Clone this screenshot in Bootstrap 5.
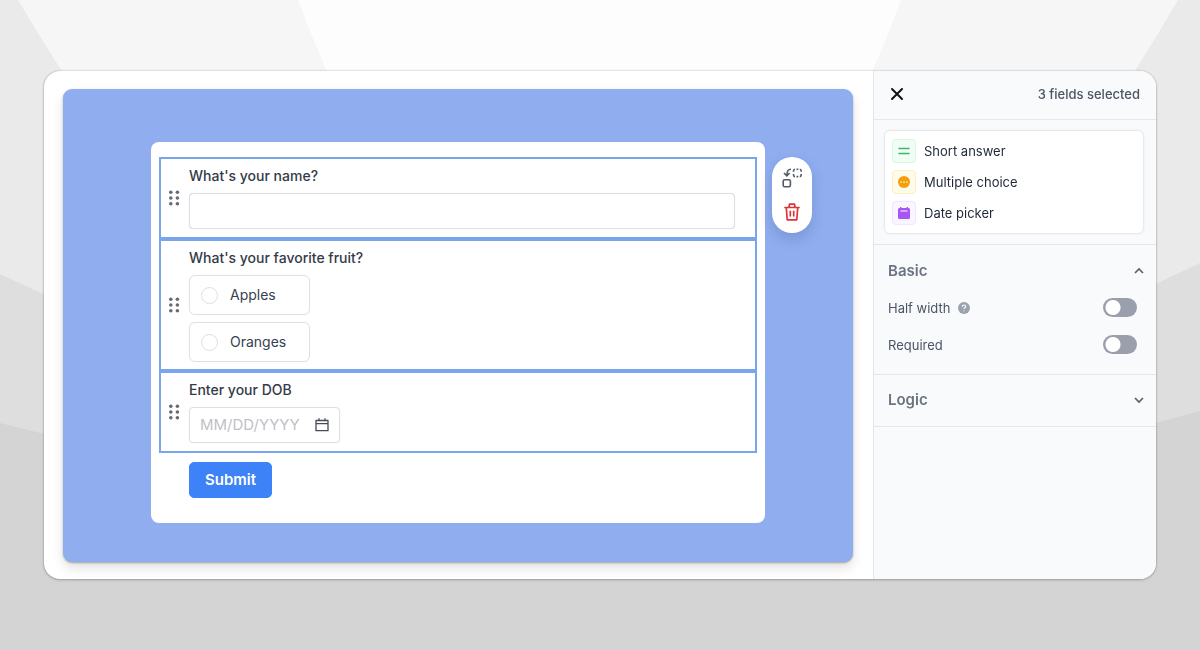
<!DOCTYPE html>
<html lang="en">
<head>
<meta charset="utf-8">
<meta name="viewport" content="width=device-width, initial-scale=1">
<title>Form builder</title>
<link href="https://cdn.jsdelivr.net/npm/bootstrap@5.3.0/dist/css/bootstrap.min.css" rel="stylesheet">
<style>
  body { font-family: Inter, "Liberation Sans", sans-serif; font-size: 14px; line-height: 20px; color: #374151; background: #d4d4d4; }
  svg { display: block; }
  .backdrop { position: fixed; inset: 0; width: 100%; height: 100%; z-index: -1; }
  .stage { min-height: 100vh; padding: 71px 44px; }
  .window { min-height: 508px; background: #fff; border-radius: 16px; overflow: hidden; box-shadow: 0 0 2px rgba(0,0,0,.3), 0 1px 3px rgba(0,0,0,.2); }
  .preview { padding: 18px 20px 17px 19px; }
  .canvas { background: #90aeef; border-radius: 9px; padding: 53px 88px 39px; box-shadow: 0 1px 2px rgba(0,0,0,.3), 0 6px 12px rgba(0,0,0,.12); }
  .form-sheet { background: #fff; border-radius: 8px; padding: 15px 8px 25px; }
  .field { border: 2px solid #79a5ed; padding: 7px 20px 8px 28px; }
  .field-choices { padding-bottom: 7px; }
  .field-title { display: block; font-weight: 500; line-height: 20px; margin-bottom: 7px; color: #343b48; }
  .grip { left: 8px; top: 50%; transform: translateY(-50%); background: none; border: 0; padding: 0; }
  .text-input, .date-box { height: 36px; border: 1px solid #dcdfe3; border-radius: 4px; box-shadow: 0 0 1px rgba(0,0,0,.12); }
  .choices { gap: 7px; }
  .choice { width: 121px; height: 40px; border: 1px solid #dfe1e5; border-radius: 6px; padding: 0 11px; gap: 12px; box-shadow: 0 0 1px rgba(0,0,0,.1); }
  .choice .form-check-input { width: 17px; height: 17px; margin: 0; border-color: #dcdee2; }
  .date-box { width: 151px; padding: 0 10px; }
  .date-box input { width: 104px; border: 0; padding: 0; outline: 0; background: none; font-size: 15px; }
  .date-box input::placeholder { color: #bfc1c6; opacity: 1; }
  .submit { background: #3d82f6; color: #fff; font-weight: 600; font-size: 15px; line-height: 20px; padding: 7px 15px; border: 1px solid #3d82f6; border-radius: 5px; margin: 9px 0 0 30px; display: block; }
  .tools { left: 100%; top: 15px; width: 40px; height: 76px; margin-left: 7px; border-radius: 20px; background: #fff; padding: 11px 0 12px; box-shadow: 0 6px 14px rgba(30,50,110,.2); }
  .tools button, .panel button { background: none; border: 0; padding: 0; }
  .panel { flex: 0 0 283px; background: #f9fafc; border-left: 1px solid #e6e7ea; font-size: 13px; color: #4b5563; }
  .panel-section { border-bottom: 1px solid #e5e7eb; }
  .panel-head { height: 49px; padding: 0 16px 2px; font-weight: 500; }
  .selected-wrap { padding: 10px 12px 10px 10px; }
  .picked { background: #fff; border: 1px solid #e8eaed; border-radius: 6px; padding: 8px 7px; gap: 7px; box-shadow: 0 0 2px rgba(0,0,0,.08); color: #1f2937; }
  .tile { width: 24px; height: 24px; border: 1px solid; border-radius: 4px; }
  .tile-green { background: #effdf4; border-color: #d5f9e1; }
  .tile-amber { background: #fffbea; border-color: #fdf0bd; }
  .tile-purple { background: #faf5ff; border-color: #f1e5ff; }
  .basic { padding: 16px 12px 11px 14px; }
  .basic .section-toggle { margin-bottom: 8px; }
  .setting { height: 37px; padding-right: 7px; }
  .logic { padding: 15px 12px 16px 14px; }
  .section-toggle { font-size: 15px; font-weight: 600; color: #6b7280; line-height: 20px; }
  .panel .switch { width: 34px; height: 19px; margin: 0; border: 0; float: none; background-color: #9b9fac; border-radius: 10px; background-image: radial-gradient(circle at 10px 50%, #fff 7px, transparent 8px); background-size: 100% 100%; background-position: 0 0; box-shadow: none; }
</style>
</head>
<body>
<svg class="backdrop" viewBox="0 0 1200 650" preserveAspectRatio="none" aria-hidden="true">
  <rect width="1200" height="650" fill="#d4d4d4"/>
  <path d="M0 0H1200V411Q600 580 0 423Z" fill="#dedede"/>
  <path d="M0 0H1200V263Q600 560 0 274Z" fill="#eaeaea"/>
  <path d="M18 0Q315 500 600 500T1178 0Z" fill="#f6f6f6"/>
  <path d="M298 0Q430 350 600 350T901 0Z" fill="#fdfdfd"/>
</svg>
<main class="stage">
  <div class="window d-flex">
    <section class="preview flex-grow-1">
      <div class="canvas h-100">
        <form class="form-sheet position-relative">
          <div class="field position-relative">
            <button type="button" class="grip position-absolute" aria-label="Move name field"><svg width="12" height="16" fill="#656a75"><circle cx="1.8" cy="2.3" r="1.8"/><circle cx="8.4" cy="2.3" r="1.8"/><circle cx="1.8" cy="8" r="1.8"/><circle cx="8.4" cy="8" r="1.8"/><circle cx="1.8" cy="13.7" r="1.8"/><circle cx="8.4" cy="13.7" r="1.8"/></svg></button>
            <label class="field-title" for="name">What's your name?</label>
            <input id="name" type="text" class="form-control text-input">
          </div>
          <fieldset class="field field-choices position-relative">
            <button type="button" class="grip position-absolute" aria-label="Move fruit field"><svg width="12" height="16" fill="#656a75"><circle cx="1.8" cy="2.3" r="1.8"/><circle cx="8.4" cy="2.3" r="1.8"/><circle cx="1.8" cy="8" r="1.8"/><circle cx="8.4" cy="8" r="1.8"/><circle cx="1.8" cy="13.7" r="1.8"/><circle cx="8.4" cy="13.7" r="1.8"/></svg></button>
            <div class="field-title">What's your favorite fruit?</div>
            <div class="choices d-flex flex-column">
              <label class="choice d-flex align-items-center" for="apples"><input class="form-check-input" type="radio" name="fruit" id="apples">Apples</label>
              <label class="choice d-flex align-items-center" for="oranges"><input class="form-check-input" type="radio" name="fruit" id="oranges">Oranges</label>
            </div>
          </fieldset>
          <div class="field position-relative">
            <button type="button" class="grip position-absolute" aria-label="Move date field"><svg width="12" height="16" fill="#656a75"><circle cx="1.8" cy="2.3" r="1.8"/><circle cx="8.4" cy="2.3" r="1.8"/><circle cx="1.8" cy="8" r="1.8"/><circle cx="8.4" cy="8" r="1.8"/><circle cx="1.8" cy="13.7" r="1.8"/><circle cx="8.4" cy="13.7" r="1.8"/></svg></button>
            <label class="field-title" for="dob">Enter your DOB</label>
            <div class="date-box d-flex align-items-center justify-content-between">
              <input id="dob" type="text" placeholder="MM/DD/YYYY">
              <svg width="14" height="14" fill="none" stroke="#454b56"><path d="M1 2.500H13V12.700H1ZM1 5.700H13M4 .2V3M10 .2V3" stroke-width="1.3" stroke-linejoin="round"/></svg>
            </div>
          </div>
          <button type="button" class="submit">Submit</button>
          <div class="tools position-absolute d-flex flex-column align-items-center justify-content-between">
            <button type="button" aria-label="Replace fields"><svg width="20" height="20" fill="none" stroke="#545b67" stroke-width="1.600"><rect x="1.200" y="11.800" width="7.200" height="7" rx="1.500"/><path d="M9 1.300C6 1.300 4.800 3 4.800 7.500M2 5L4.800 7.900L7.600 5M11.500 3.800V3Q11.500 1.300 13 1.300M14.500 1.300H16.300M17.800 1.300Q19.200 1.300 19.200 3V3.800M19.200 6V7Q19.200 8.600 17.800 8.600M16.300 8.600H14.500M13 8.600Q11.500 8.600 11.500 7V6"/></svg></button>
            <button type="button" aria-label="Delete fields"><svg width="16" height="18" fill="none" stroke="#dc3437" stroke-width="1.700" stroke-linecap="round" stroke-linejoin="round"><path d="M1 4.500H15M5 4.500L5.500 1.200H10.500L11 4.500M2.300 4.500L3.200 16.800H12.800L13.700 4.500M6.300 8.300V12.800M9.700 8.300V12.800"/></svg></button>
          </div>
        </form>
      </div>
    </section>
    <aside class="panel">
      <div class="panel-section panel-head d-flex align-items-center justify-content-between">
        <button type="button" aria-label="Close"><svg width="14" height="14" fill="none" stroke="#0f1217" stroke-width="2" stroke-linecap="round"><path d="M2 2L12 12M12 2L2 12"/></svg></button>
        <span>3 fields selected</span>
      </div>
      <div class="panel-section selected-wrap">
        <ul class="picked list-unstyled d-flex flex-column m-0">
          <li class="d-flex align-items-center gap-2"><span class="tile tile-green d-flex align-items-center justify-content-center"><svg width="12" height="12" stroke="#3cb96a" stroke-width="1.500" stroke-linecap="round"><path d="M1 3.500H11M1 8.500H11"/></svg></span>Short answer</li>
          <li class="d-flex align-items-center gap-2"><span class="tile tile-amber d-flex align-items-center justify-content-center"><svg width="12" height="12"><circle cx="6" cy="6" r="6" fill="#f59e0b"/><path d="M3 6h.01M6 6h.01M9 6h.01" stroke="#fff5cc" stroke-width="1.700" stroke-linecap="round"/></svg></span>Multiple choice</li>
          <li class="d-flex align-items-center gap-2"><span class="tile tile-purple d-flex align-items-center justify-content-center"><svg width="12" height="12"><path d="M1.500 1H2V0H3.500V1H8.500V0H10V1H10.500Q12 1 12 2.500V10.500Q12 12 10.500 12H1.500Q0 12 0 10.500V2.500Q0 1 1.500 1Z" fill="#a855f7"/><path d="M2.500 4H9.500" stroke="#fff" stroke-width="1.200"/></svg></span>Date picker</li>
        </ul>
      </div>
      <div class="panel-section basic">
        <button type="button" class="section-toggle d-flex w-100 align-items-center justify-content-between" aria-expanded="true">Basic<svg width="10" height="8" fill="none" stroke="#596170" stroke-width="1.700"><path d="M1 6L5 2L9 6"/></svg></button>
        <div class="setting d-flex align-items-center"><label for="half">Half width</label><svg class="ms-2" width="12" height="12"><circle cx="6" cy="6" r="6" fill="#9ca3af"/><path d="M4.300 4.700Q4.300 3 6 3T7.700 4.500Q7.700 5.300 6.800 5.800Q6 6.200 6 7M6 8.600V9.300" fill="none" stroke="#fff" stroke-width="1.200"/></svg><input id="half" class="form-check-input switch ms-auto" type="checkbox" role="switch"></div>
        <div class="setting d-flex align-items-center"><label for="required">Required</label><input id="required" class="form-check-input switch ms-auto" type="checkbox" role="switch"></div>
      </div>
      <div class="panel-section logic">
        <button type="button" class="section-toggle d-flex w-100 align-items-center justify-content-between" aria-expanded="false">Logic<svg width="10" height="8" fill="none" stroke="#596170" stroke-width="1.700"><path d="M1 2L5 6L9 2"/></svg></button>
      </div>
    </aside>
  </div>
</main>
<script src="https://cdn.jsdelivr.net/npm/bootstrap@5.3.0/dist/js/bootstrap.bundle.min.js"></script>
</body>
</html>
